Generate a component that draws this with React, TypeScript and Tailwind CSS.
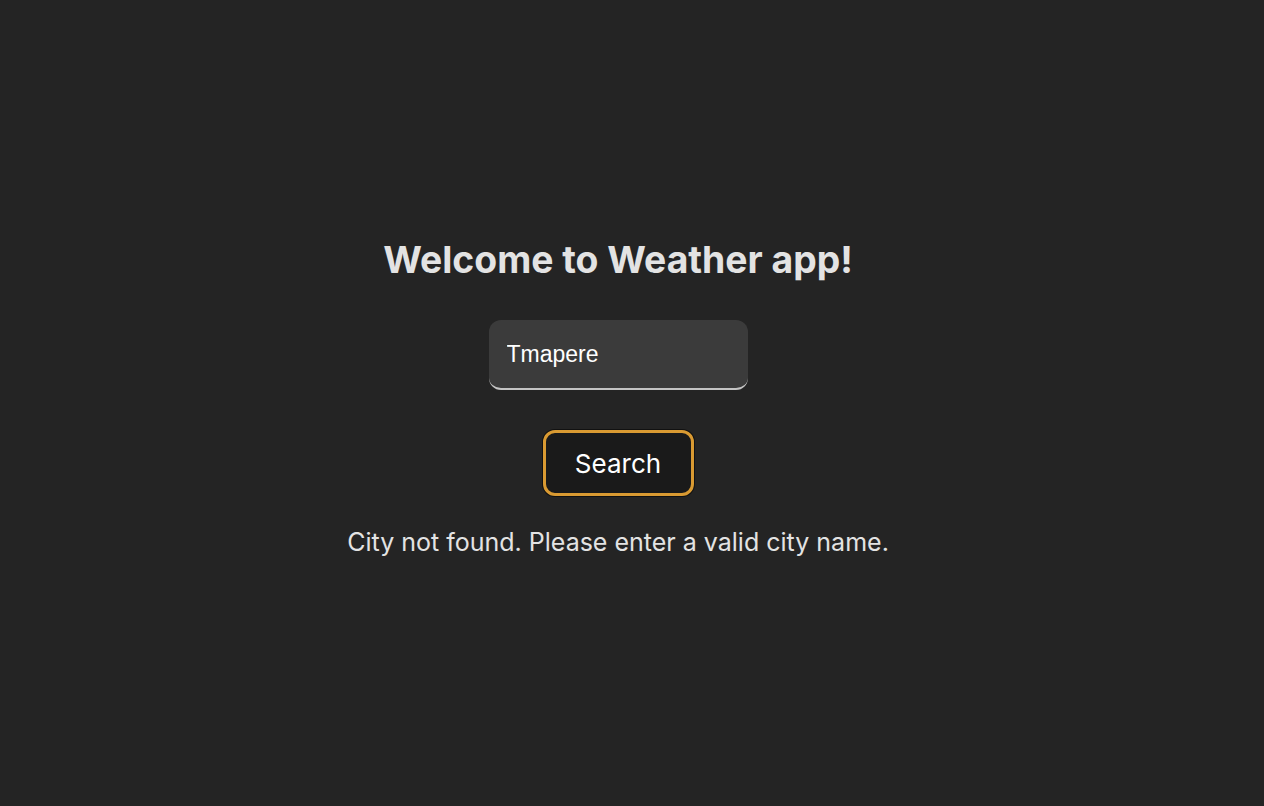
export default function App() {
  return (
    <div className="min-h-screen w-full bg-[#242424] flex flex-col items-center justify-center pr-[28px] pb-[10px] font-['Inter',sans-serif] text-[#e6e6e6]">
      <h1 className="text-[37.3px] leading-[44px] font-bold text-[#e3e3e3]">
        Welcome to Weather app!
      </h1>
      <input
        type="text"
        defaultValue="Tmapere"
        className="mt-[38px] w-[259px] h-[70px] rounded-[12px] bg-[#3b3b3b] border-b-2 border-[#c4c4c4] px-[18px] text-[23px] text-white font-['Liberation_Sans',sans-serif] outline-none"
      />
      <button className="mt-[40px] w-[151px] h-[66px] rounded-[12px] border-[3px] border-[#d99a32] bg-[#1a1a1a] text-[26px] text-white ring-1 ring-[#111] cursor-pointer">
        Search
      </button>
      <p className="mt-[30px] text-[25px] leading-[32px] text-[#e3e3e3]">
        City not found. Please enter a valid city name.
      </p>
    </div>
  );
}
